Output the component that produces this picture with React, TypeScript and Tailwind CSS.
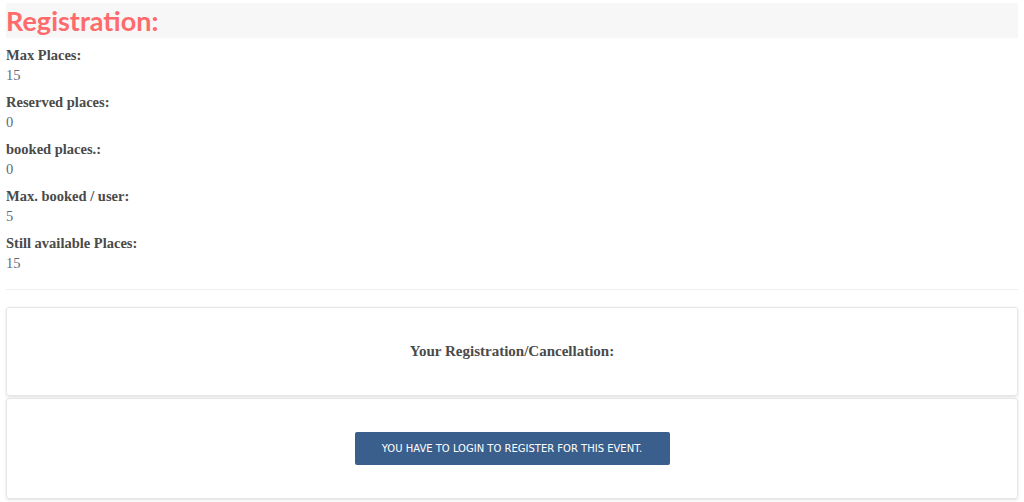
import React from 'react';

const rows = [
  { label: 'Max Places:', value: '15' },
  { label: 'Reserved places:', value: '0' },
  { label: 'booked places.:', value: '0' },
  { label: 'Max. booked / user:', value: '5' },
  { label: 'Still available Places:', value: '15' },
];

export default function App() {
  return (
    <div className="min-h-screen bg-white px-[6px] pt-[3px] font-['Liberation_Serif',serif]">
      <h2 className="bg-[#f7f7f7] h-[35px] flex items-center font-['Lato',sans-serif] font-bold text-[27px] leading-none text-[#ff6b6b]">
        Registration:
      </h2>
      <div className="flex flex-col gap-[7px] pt-[7px]">
        {rows.map((r) => (
          <div key={r.label}>
            <div className="text-[14.5px] leading-[21px] font-bold text-[#4a4a4a]">{r.label}</div>
            <div className="text-[14.5px] leading-[19px] text-[#5c6b7a]">{r.value}</div>
          </div>
        ))}
      </div>
      <div className="mt-[16px] border-t border-[#eeeeee]" />
      <div className="mt-[17px] h-[89px] rounded-[3px] border border-[#e6e6e6] shadow-[0_1px_3px_rgba(0,0,0,0.12)] flex items-center justify-center">
        <span className="text-[15px] font-bold text-[#4a4a4a]">Your Registration/Cancellation:</span>
      </div>
      <div className="mt-[2px] h-[101px] rounded-[3px] border border-[#e6e6e6] shadow-[0_1px_3px_rgba(0,0,0,0.12)] flex items-center justify-center">
        <button className="w-[315px] h-[33px] rounded-[2px] bg-[#3b5f8c] text-white text-[10px] font-['DejaVu_Sans',sans-serif] uppercase">
          You have to login to register for this event.
        </button>
      </div>
    </div>
  );
}
